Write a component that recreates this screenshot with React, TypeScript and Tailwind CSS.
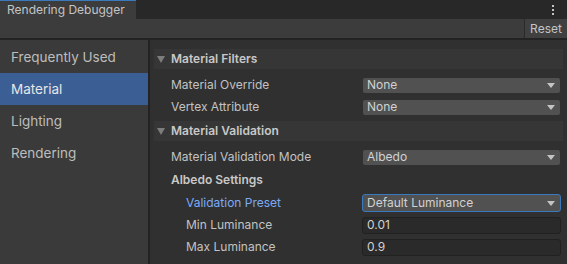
const font = { fontFamily: "Inter, 'Noto Sans', sans-serif" };

const Caret = () => (
  <svg width="8" height="5" viewBox="0 0 8 5" className="shrink-0">
    <path d="M0 0h8L4 5z" fill="#c4c4c4" />
  </svg>
);

const Dropdown = ({ value, focused }: { value: string; focused?: boolean }) => (
  <div
    className={
      "flex items-center justify-between w-[199px] rounded-[3px] pl-[4px] pr-[5px] text-[12px] text-[#d2d2d2] bg-[#515151] " +
      (focused ? "h-[18px] border border-[#3a79bb]" : "h-[17px] border border-[#303030]")
    }
  >
    <span>{value}</span>
    <Caret />
  </div>
);

const Field = ({ value }: { value: string }) => (
  <div className="flex items-center w-[199px] h-[17px] rounded-[3px] pl-[4px] text-[12px] text-[#d2d2d2] bg-[#2a2a2a] border border-[#212121]">
    {value}
  </div>
);

const Header = ({ title }: { title: string }) => (
  <div className="flex items-center h-[20px] bg-[#363636] pl-[3px] gap-[6px]">
    <svg width="8" height="7" viewBox="0 0 8 7">
      <path d="M0 0h8L4 7z" fill="#7d7d7d" />
    </svg>
    <span className="text-[12px] font-semibold text-[#c8c8c8]">{title}</span>
  </div>
);

const Row = ({ label, indent, blue, children }: { label: string; indent?: boolean; blue?: boolean; children: React.ReactNode }) => (
  <div className="flex items-center h-[22px]">
    <span
      className={
        "flex-1 text-[12px] " +
        (indent ? "pl-[32px] " : "pl-[17px] ") +
        (blue ? "text-[#7babf5]" : "text-[#c2c2c2]")
      }
    >
      {label}
    </span>
    <div className="pr-[2px]">{children}</div>
  </div>
);

export default function App() {
  const items = ["Frequently Used", "Material", "Lighting", "Rendering"];
  return (
    <div className="w-[567px] h-[264px] flex flex-col bg-[#303030] overflow-hidden" style={font}>
      <div className="flex h-[19px] bg-[#282828] shrink-0">
        <div className="w-[136px] bg-[#3c3c3c] border-t border-[#3a79bb] pl-[7px] text-[12px] text-[#c4c4c4] flex items-center">
          Rendering Debugger
        </div>
        <div className="flex-1" />
        <div className="w-[14px] flex flex-col items-center justify-center gap-[2px] mr-[7px]">
          <div className="w-[2px] h-[2px] bg-[#c4c4c4]" />
          <div className="w-[2px] h-[2px] bg-[#c4c4c4]" />
          <div className="w-[2px] h-[2px] bg-[#c4c4c4]" />
        </div>
      </div>
      <div className="flex h-[21px] bg-[#3c3c3c] border-b-2 border-[#232323] shrink-0">
        <div className="flex-1" />
        <div className="w-[43px] border-l border-[#2a2a2a] bg-[#404040] flex items-center justify-center text-[12px] text-[#c4c4c4]">
          Reset
        </div>
      </div>
      <div className="flex flex-1">
        <div className="w-[150px] bg-[#3a3a3a] border-r-2 border-[#232323] flex flex-col pt-[1px]">
          {items.map((item) => (
            <div
              key={item}
              className={
                "h-[32px] flex items-center pl-[11px] text-[13.5px] " +
                (item === "Material" ? "bg-[#3b5e95] text-[#e6e6e6]" : "text-[#bdbdbd]")
              }
            >
              {item}
            </div>
          ))}
        </div>
        <div className="flex-1 flex flex-col pt-[9px] pl-[4px] pr-[4px]">
          <Header title="Material Filters" />
          <div className="mt-[5px]">
            <Row label="Material Override">
              <Dropdown value="None" />
            </Row>
            <Row label="Vertex Attribute">
              <Dropdown value="None" />
            </Row>
          </div>
          <div className="mt-[3px]">
            <Header title="Material Validation" />
          </div>
          <div className="mt-[5px]">
            <Row label="Material Validation Mode">
              <Dropdown value="Albedo" />
            </Row>
            <div className="flex items-center h-[22px] mt-[1px] pl-[17px] text-[12px] font-semibold text-[#c8c8c8]">
              Albedo Settings
            </div>
            <div className="mt-[1px]">
              <Row label="Validation Preset" indent blue>
                <Dropdown value="Default Luminance" focused />
              </Row>
              <Row label="Min Luminance" indent>
                <Field value="0.01" />
              </Row>
              <Row label="Max Luminance" indent>
                <Field value="0.9" />
              </Row>
            </div>
          </div>
        </div>
      </div>
    </div>
  );
}
